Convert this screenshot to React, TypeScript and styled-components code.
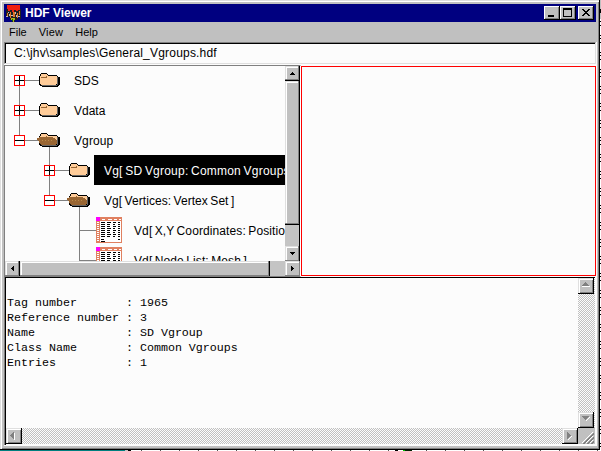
import React from 'react';
import styled, { createGlobalStyle, css } from 'styled-components';

const GlobalStyle = createGlobalStyle`
  * { box-sizing: border-box; }
  html, body { margin: 0; overflow: hidden; background: #fff; }
  svg { display: block; flex: none; shape-rendering: crispEdges; }
`;

const Desktop = styled.div`
  width: 601px;
  height: 451px;
  display: grid;
  grid-template: 450px 1px / 600px 1px;
  font: 12px/15px "Liberation Sans", Arial, sans-serif;
  color: #000;
`;

const Window = styled.div`
  display: flex;
  flex-direction: column;
  padding: 2px 1px 2px 2px;
  background: #c0c0c0;
  border-right: 1px solid #000;
  border-bottom: 1px solid #000;
  box-shadow: inset 1px 1px #dfdfdf, inset 2px 2px #fff, inset -1px -1px #808080;
`;

const TitleBar = styled.div`
  height: 18px;
  flex: none;
  margin: 2px 2px 0;
  padding: 0 2px;
  display: flex;
  align-items: center;
  background: #000080;
  color: #fff;
  font-weight: bold;
`;

const Title = styled.span`
  flex: 1;
  padding-left: 4px;
  letter-spacing: 0;
`;

const CaptionButton = styled.div<{ $gap?: boolean }>`
  width: 16px;
  height: 14px;
  margin-left: ${(p) => (p.$gap ? 2 : 0)}px;
  background: #c0c0c0;
  box-shadow: inset -1px -1px #000, inset 1px 1px #fff, inset -2px -2px #808080;
`;

const MenuBar = styled.div`
  height: 20px;
  flex: none;
  display: flex;
  gap: 12px;
  padding: 3px 7px 0;
  font-size: 11px;
`;

const MenuItem = styled.span<{ $spacing?: number }>`
  letter-spacing: ${(p) => p.$spacing ?? 0}px;
`;

const Client = styled.div`
  width: 593px;
  height: 404px;
  margin-left: 2px;
  display: flex;
  flex-direction: column;
  background: #fcfcfc;
`;

const PathField = styled.div`
  height: 22px;
  flex: none;
  margin-right: 1px;
  padding: 1px 9px;
  border-top: 1px solid #808080;
  border-left: 1px solid #808080;
  border-right: 1px solid #dfdfdf;
  border-bottom: 1px solid #dfdfdf;
  box-shadow: inset 1px 1px #000;
  line-height: 18px;
  letter-spacing: 0.2px;
  white-space: pre;
`;

const Panes = styled.div`
  height: 212px;
  flex: none;
  margin-top: 1px;
  display: grid;
  grid-template-columns: 297px 295px;
`;

const TreePane = styled.div`
  display: grid;
  grid-template: 195px 15px / 280px 15px;
  border-top: 1px solid #808080;
  border-left: 1px solid #808080;
  border-right: 1px solid #fff;
  border-bottom: 1px solid #808080;
`;

const TreeView = styled.div`
  overflow: hidden;
  height: 195px;
`;

const TreeRow = styled.div`
  display: flex;
  height: 30px;
  &:first-child { margin-top: -1px; }
`;

const RowLabel = styled.span<{ $selected?: boolean; $spacing: number }>`
  flex: 1 0 auto;
  padding-left: 10px;
  line-height: 32px;
  height: 30px;
  word-spacing: -1px;
  letter-spacing: ${(p) => p.$spacing}px;
  white-space: pre;
  ${(p) => p.$selected && css`background: #000; color: #fff;`}
`;

const CanvasPane = styled.div`
  height: 210px;
  margin-top: 1px;
  border: 1px solid #f00;
`;

const raised = css`
  background: #c0c0c0;
  box-shadow: inset -1px -1px #808080, inset 1px 1px #dfdfdf, inset 2px 2px #fff;
`;

const ScrollBar = styled.div<{ $vertical?: boolean }>`
  display: flex;
  flex-direction: ${(p) => (p.$vertical ? 'column' : 'row')};
  background: #c4c4c4;
  min-width: 0;
  min-height: 0;
  ${(p) => p.$vertical && css`border-right: 1px solid #000;`}
  ${(p) => !p.$vertical && css`grid-column: 1 / 3;`}
`;

const ScrollButton = styled.div<{ $size: number }>`
  flex: 0 0 ${(p) => p.$size}px;
  display: grid;
  place-items: center;
  ${raised}
`;

const Thumb = styled.div<{ $size: number; $vertical?: boolean }>`
  flex: 0 0 ${(p) => p.$size}px;
  ${raised}
  ${(p) =>
    p.$vertical
      ? css`border-top: 1px solid #000; border-bottom: 1px solid #000;`
      : css`border-left: 1px solid #000; border-right: 1px solid #000;`}
`;

const Track = styled.div`
  flex: 1;
`;

const InfoPane = styled.div`
  height: 168px;
  flex: none;
  display: grid;
  grid-template: 150px 16px / 572px 17px;
  border-top: 1px solid #000;
  border-left: 1px solid #000;
  margin-left: 1px;
  margin-right: 2px;
  box-shadow: -1px 0 #808080;
`;

const InfoText = styled.pre`
  margin: 0;
  padding: 18px 0 0 1px;
  font: 11.665px/15px "Liberation Mono", "Courier New", monospace;
`;

const DisabledBar = styled.div<{ $vertical?: boolean }>`
  display: flex;
  flex-direction: ${(p) => (p.$vertical ? 'column' : 'row')};
  justify-content: space-between;
  background: repeating-conic-gradient(#c0c0c0 0 25%, #fcfcfc 0 50%) 0 0 / 2px 2px;
`;

const DisabledButton = styled.div`
  width: 16px;
  height: 16px;
  display: grid;
  place-items: center;
  background: #c0c0c0;
  border-right: 1px solid #000;
  border-bottom: 1px solid #000;
  box-shadow: inset 1px 1px #dfdfdf, inset 2px 2px #fff, inset -1px -1px #808080;
`;

const Grip = styled.div`
  background: #c0c0c0;
`;

const EdgeRight = styled.div`
  background:
    linear-gradient(#c0c0c0 0 9px, #000 9px 13px, #c0c0c0 13px 19px, transparent 19px),
    repeating-linear-gradient(#fff 0 1px, #000 1px 2px, #fff 2px 4px, #000 4px 5px, #fff 5px 8px, #000 8px 9px, #fff 9px 17px);
`;

const EdgeBottom = styled.div`
  grid-column: 1 / 3;
  background:
    linear-gradient(90deg, #008080 0 125px, #c0c0c0 125px 128px, #000 128px 131px, transparent 131px 395px, #000 395px 398px, #fff 398px 403px, #00c000 403px 405px, #002000 405px 412px, transparent 412px),
    repeating-linear-gradient(90deg, #fff 0 8px, #555 8px 9px, #fff 9px 19px);
`;

type Dir = 'up' | 'down' | 'left' | 'right';
const arrows: Record<Dir, string> = {
  up: 'M3 0h1v1h1v1h1v1H1V2h1V1h1z',
  down: 'M1 0h5v1H5v1H4v1H3V2H2V1H1z',
  left: 'M3 0v5H2V4H1V3H0V2h1V1h1V0z',
  right: 'M0 0h1v1h1v1h1v1H2v1H1v1H0z',
};

const Arrow = ({ dir }: { dir: Dir }) =>
  dir === 'up' || dir === 'down' ? (
    <svg width="7" height="3"><path d={arrows[dir]} /></svg>
  ) : (
    <svg width="3" height="5"><path d={arrows[dir]} /></svg>
  );

const disabledPaths: Record<Dir, [string, string]> = {
  up: ['M4 1h1v1h1v1h1v1h1v1H1V4h1V3h1V2h1z', 'M1 5h8v1H1z'],
  down: ['M1 1h7v1H7v1H6v1H5v1H4V4H3V3H2V2H1z', 'M8 2h1v1H8v1H7v1H6v1H5V5h1V4h1V3h1z'],
  left: ['M5 1v7H4V7H3V6H2V5H1V4h1V3h1V2h1V1z', 'M5 2h1v7H5z'],
  right: ['M2 1h1v1h1v1h1v1h1v1H5v1H4v1H3v1H2z', 'M6 5h1v1H6v1H5v1H4v1H3V8h1V7h1V6h1z'],
};

const DisabledArrow = ({ dir }: { dir: Dir }) => (
  <svg width="9" height="9">
    <path fill="#fff" d={disabledPaths[dir][1]} />
    <path fill="#808080" d={disabledPaths[dir][0]} />
  </svg>
);

const AppIcon = () => (
  <svg width="15" height="18" viewBox="0 0 15 18">
    <path fill="#202020" d="M0 5h15v10h-2v-2h-1v3H9v2H6v-2H4v-3H0z" />
    <path fill="#f02010" d="M1 1h13v5h-2v1h-2V6H8v2H6V6H4v1H2V5H1z" />
    <path fill="#e07828" d="M1 9h1v3H1zM4 8h1v6H4zM7 8h2v5H7zM11 9h1v5h-1zM13 7h1v4h-1z" />
    <path fill="#c0c0c0" d="M2 8h1v1H2zM3 10h1v2H3zM5 11h2v1H5zM9 8h1v2H9zM10 11h1v2h-1zM12 12h2v1h-2zM0 12h2v1H0z" />
    <path fill="#b0b020" d="M5 14h4v2H8v2H7v-2H5z" />
    <path fill="#008000" d="M6 15h1v2H6z" />
  </svg>
);

const Folder = ({ x, open }: { x: number; open?: boolean }) => (
  <g transform={`translate(${x} 8)`}>
    <path fill="#000" d="M2 0h6v1h1v1h9v1h1v1h2v8h-1v1h-1v1H3v-1H1v-1H0V3h1V1h1z" />
    <path fill="#ffcc99" d="M2 1h6v1h1v1h9v8h-1v1H2v-1H1V3h1z" />
    <path fill="#996633" d="M2 4h5V3h1v2H2z" />
    <path fill="#666" d="M18 4h1v8h-1zM3 12h15v1H3z" />
    {open && (
      <>
        <path fill="#996633" d="M0 4h14v1h2v1h1v1h1v4h-1v1H2v-1H1v-1H0V8h-1V7h-1V5h2z" />
        <path stroke="#b98a4a" strokeDasharray="1 2" d="M3 7.5h12" />
      </>
    )}
  </g>
);

const TableIcon = () => (
  <g transform="translate(91 2)">
    <rect width="26" height="26" fill="#e08060" />
    <rect x="4" y="4" width="21" height="21" fill="#fff" />
    <rect width="4" height="4" fill="#f0f" />
    <path stroke="#fff" d="M6 2.5h3M12 2.5h4M18 2.5h3M23 2.5h2" />
    <path stroke="#fff" strokeWidth="2" strokeDasharray="1 1" d="M2 5v20" />
    {[5, 7, 9, 11, 13, 15, 17, 19].map((y, i) => (
      <path key={y} stroke="#000" d={`M5 ${y + 0.5}h4M11 ${y + 0.5}h${i % 3 ? 3 : 4}M17 ${y + 0.5}h${i % 2 ? 2 : 3}M22 ${y + 0.5}h2`} />
    ))}
    <path stroke="#000" d="M5 22.5h3M5 24.5h4M22 22.5h2" />
  </g>
);

interface Node {
  label: string;
  level: number;
  kind: 'closed' | 'open' | 'table';
  above?: boolean;
  below?: boolean;
  selected?: boolean;
  spacing: number;
}

const nodes: Node[] = [
  { label: 'SDS', level: 0, kind: 'closed', below: true, spacing: 0 },
  { label: 'Vdata', level: 0, kind: 'closed', above: true, below: true, spacing: 0 },
  { label: 'Vgroup', level: 0, kind: 'open', above: true, spacing: 0.1 },
  { label: 'Vg[ SD Vgroup: Common Vgroups ]', level: 1, kind: 'closed', above: true, below: true, selected: true, spacing: 0.22 },
  { label: 'Vg[ Vertices: Vertex Set ]', level: 1, kind: 'open', above: true, spacing: 0.06 },
  { label: 'Vd[ X,Y Coordinates: Position ]', level: 2, kind: 'table', above: true, below: true, spacing: 0.1 },
  { label: 'Vd[ Node List: Mesh ]', level: 2, kind: 'table', above: true, below: true, spacing: 0.1 },
];

const Gutter = ({ node }: { node: Node }) => {
  const x = 14 + node.level * 30;
  const table = node.kind === 'table';
  return (
    <svg width={59 + node.level * 30} height="30">
      <path
        stroke="#808080"
        fill="none"
        d={`M${x} 15.5h20${node.above ? `M${x + 0.5} 0v15` : ''}${node.below ? `M${x + 0.5} 15v15` : ''}${node.kind === 'open' ? `M${x + 30.5} 20v10` : ''}`}
      />
      {!table && (
        <>
          <rect x={x - 4.5} y="10.5" width="10" height="10" fill="#fff" stroke="#f00" />
          <path stroke="#000" d={`M${x - 4} 15.5h9${node.kind === 'closed' ? `M${x + 0.5} 11v9` : ''}`} />
          <Folder x={x + 20} open={node.kind === 'open'} />
        </>
      )}
      {table && <TableIcon />}
    </svg>
  );
};

const info = [
  ['Tag number', '1965'],
  ['Reference number', '3'],
  ['Name', 'SD Vgroup'],
  ['Class Name', 'Common Vgroups'],
  ['Entries', '1'],
];

export default function App() {
  return (
    <>
      <GlobalStyle />
      <Desktop>
        <Window>
          <TitleBar>
            <AppIcon />
            <Title>HDF Viewer</Title>
            <CaptionButton><svg width="16" height="14"><path d="M4 9h6v2H4z" /></svg></CaptionButton>
            <CaptionButton><svg width="16" height="14"><path fillRule="evenodd" d="M3 2h9v9H3zM4 4v6h7V4z" /></svg></CaptionButton>
            <CaptionButton $gap><svg width="16" height="14"><path d="M4 3h2v1h1v1h2V4h1V3h2v1h-1v1h-1v1H9v1h1v1h1v1h1v1h-2V9H9V8H7v1H6v1H4V9h1V8h1V7h1V6H6V5H5V4H4z" /></svg></CaptionButton>
          </TitleBar>
          <MenuBar>
            <MenuItem>File</MenuItem>
            <MenuItem $spacing={0.2}>View</MenuItem>
            <MenuItem>Help</MenuItem>
          </MenuBar>
          <Client>
            <PathField>C:\jhv\samples\General_Vgroups.hdf</PathField>
            <Panes>
              <TreePane>
                <TreeView>
                  {nodes.map((n) => (
                    <TreeRow key={n.label}>
                      <Gutter node={n} />
                      <RowLabel $selected={n.selected} $spacing={n.spacing}>{n.label}</RowLabel>
                    </TreeRow>
                  ))}
                </TreeView>
                <ScrollBar $vertical>
                  <ScrollButton $size={14}><Arrow dir="up" /></ScrollButton>
                  <Thumb $vertical $size={145} />
                  <Track />
                  <ScrollButton $size={15}><Arrow dir="down" /></ScrollButton>
                </ScrollBar>
                <ScrollBar>
                  <ScrollButton $size={14}><Arrow dir="left" /></ScrollButton>
                  <Thumb $size={251} />
                  <Track />
                  <ScrollButton $size={15}><Arrow dir="right" /></ScrollButton>
                </ScrollBar>
              </TreePane>
              <CanvasPane />
            </Panes>
            <InfoPane>
              <InfoText>{info.map(([k, v]) => `${k.padEnd(17)}: ${v}`).join('\n')}</InfoText>
              <DisabledBar $vertical>
                <DisabledButton><DisabledArrow dir="up" /></DisabledButton>
                <DisabledButton><DisabledArrow dir="down" /></DisabledButton>
              </DisabledBar>
              <DisabledBar>
                <DisabledButton><DisabledArrow dir="left" /></DisabledButton>
                <DisabledButton><DisabledArrow dir="right" /></DisabledButton>
              </DisabledBar>
              <Grip>
                <svg width="16" height="16">
                  <path stroke="#fff" d="M4 15L15 4M8 15l7-7M12 15l3-3" />
                  <path stroke="#808080" strokeWidth="2" d="M5.5 16L16 5.5M9.5 16l6.5-6.5M13.5 16l2.5-2.5" />
                </svg>
              </Grip>
            </InfoPane>
          </Client>
        </Window>
        <EdgeRight />
        <EdgeBottom />
      </Desktop>
    </>
  );
}
